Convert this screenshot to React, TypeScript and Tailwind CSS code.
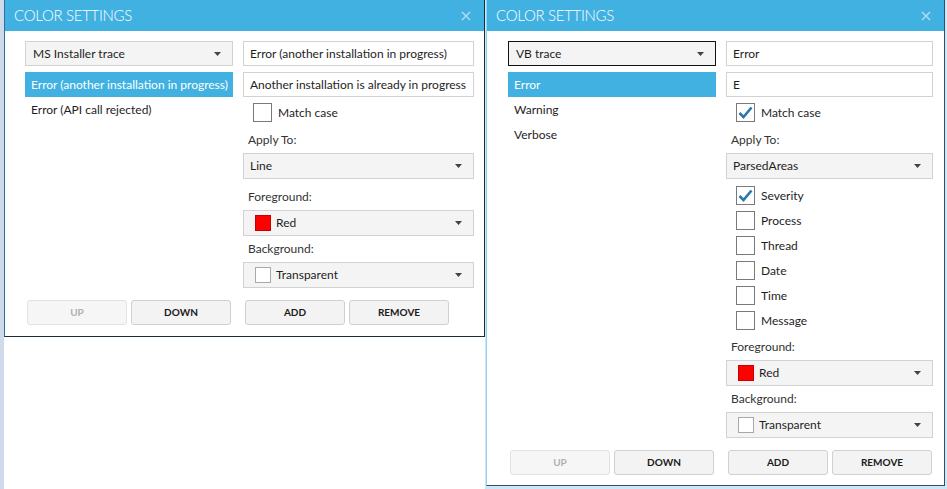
import React from "react";

const FONT = { fontFamily: "Lato, 'Open Sans', sans-serif" };

function Arrow() {
  return (
    <svg width="7" height="4" viewBox="0 0 7 4" className="shrink-0">
      <path d="M0 0 L7 0 L3.5 4 Z" fill="#444" />
    </svg>
  );
}

function Combo({ children, focused = false, h = 26 }: { children: React.ReactNode; focused?: boolean; h?: number }) {
  return (
    <div
      className={`flex items-center justify-between pl-[6px] pr-[11px] bg-[#f4f4f4] border ${focused ? "border-[#111]" : "border-[#d2d2d2]"}`}
      style={{ height: h }}
    >
      <div className="flex items-center gap-[5px] text-[12px] text-[#1e1e1e]">{children}</div>
      <Arrow />
    </div>
  );
}

function TextBox({ value }: { value: string }) {
  return (
    <div className="h-[25px] flex items-center px-[6px] bg-white border border-[#d2d2d2] text-[12px] text-[#1e1e1e] whitespace-nowrap overflow-hidden">
      {value}
    </div>
  );
}

function Check({ checked, label }: { checked: boolean; label: string }) {
  return (
    <div className="h-[25px] flex items-center pl-[10px] gap-[6px]">
      <div className="w-[19px] h-[19px] border border-[#7a7a7a] bg-white flex items-center justify-center">
        {checked && (
          <svg width="15" height="13" viewBox="0 0 15 13">
            <path d="M1.5 7 L5.5 11 L13.5 1.5" fill="none" stroke="#2a78ad" strokeWidth="2.6" />
          </svg>
        )}
      </div>
      <span className="text-[12px] text-[#1e1e1e]">{label}</span>
    </div>
  );
}

function Label({ children, mt }: { children: React.ReactNode; mt: number }) {
  return (
    <div className="h-[16px] leading-[16px] pl-[5px] mb-[5px] text-[12px] text-[#333]" style={{ marginTop: mt }}>
      {children}
    </div>
  );
}

function Swatch({ red }: { red: boolean }) {
  return red ? (
    <div className="w-[16px] h-[16px] bg-[#ff0000] border border-[#c80000] ml-[5px]" />
  ) : (
    <div className="w-[16px] h-[16px] bg-white border border-[#a8a8a8] ml-[5px]" />
  );
}

function Btn({ label, disabled = false }: { label: string; disabled?: boolean }) {
  return (
    <div
      className={`w-[100px] h-[25px] rounded-[3px] border flex items-center justify-center text-[10px] font-bold ${
        disabled ? "bg-[#f6f6f6] border-[#e2e2e2] text-[#b0b0b0]" : "bg-[#f3f3f3] border-[#d0d0d0] text-[#1a1a1a]"
      }`}
    >
      {label}
    </div>
  );
}

function Title() {
  return (
    <div className="h-[31px] bg-[#41b1e1] flex items-center justify-between pl-[9px] pr-[13px]">
      <span className="text-[15px] font-light text-white tracking-[-0.3px]">COLOR SETTINGS</span>
      <svg width="10" height="10" viewBox="0 0 10 10">
        <path d="M1 1 L9 9 M9 1 L1 9" stroke="#b9dff2" strokeWidth="1.3" />
      </svg>
    </div>
  );
}

function ListItem({ text, selected = false }: { text: string; selected?: boolean }) {
  return (
    <div
      className={`h-[25px] flex items-center px-[6px] text-[12px] whitespace-nowrap ${
        selected ? "bg-[#41b1e1] text-white" : "text-[#1e1e1e]"
      }`}
    >
      {text}
    </div>
  );
}

export default function App() {
  return (
    <div className="relative w-[947px] h-[489px] bg-white overflow-hidden" style={FONT}>
      {/* desktop left strip */}
      <div className="absolute left-0 top-0 w-[4px] h-[489px] bg-[#cfdbeb]" />
      {/* right window glow area */}
      <div className="absolute left-[485px] top-0 w-[462px] h-[489px] bg-[#c9e9f8]" />

      {/* Right window */}
      <div className="absolute left-[486px] top-0 w-[459px] h-[486px] bg-white border-l border-l-[#8fd3f3] border-r border-r-[#3b4b57] border-b border-b-[#3b4b57] flex flex-col">
        <Title />
        <div className="flex flex-col pl-[21px] pr-[11px] pt-[10px]">
          <div className="flex gap-[10px]">
            <div className="w-[208px] flex flex-col">
              <Combo focused h={25}>
                <span className="pl-[1px]">VB trace</span>
              </Combo>
              <div className="h-[6px]" />
              <ListItem text="Error" selected />
              <ListItem text="Warning" />
              <ListItem text="Verbose" />
            </div>
            <div className="flex-1 flex flex-col">
              <TextBox value="Error" />
              <div className="h-[6px]" />
              <TextBox value="E" />
              <div className="h-[3px]" />
              <Check checked label="Match case" />
              <Label mt={7}>Apply To:</Label>
              <Combo>ParsedAreas</Combo>
              <div className="h-[4px]" />
              <Check checked label="Severity" />
              <Check checked={false} label="Process" />
              <Check checked={false} label="Thread" />
              <Check checked={false} label="Date" />
              <Check checked={false} label="Time" />
              <Check checked={false} label="Message" />
              <Label mt={6}>Foreground:</Label>
              <Combo>
                <Swatch red />
                <span>Red</span>
              </Combo>
              <Label mt={5}>Background:</Label>
              <Combo>
                <Swatch red={false} />
                <span>Transparent</span>
              </Combo>
            </div>
          </div>
          <div className="flex gap-[10px] mt-[12px]">
            <div className="w-[208px] flex gap-[4px] pl-[2px]">
              <Btn label="UP" disabled />
              <Btn label="DOWN" />
            </div>
            <div className="flex gap-[4px] pl-[2px]">
              <Btn label="ADD" />
              <Btn label="REMOVE" />
            </div>
          </div>
        </div>
      </div>

      {/* Left window */}
      <div className="absolute left-[4px] top-0 w-[481px] h-[337px] bg-white border-l border-l-[#2f6f9c] border-r border-r-[#1c2a35] border-b border-b-[#1c2a35] flex flex-col">
        <Title />
        <div className="flex flex-col pl-[20px] pr-[10px] pt-[10px]">
          <div className="flex gap-[10px]">
            <div className="w-[208px] flex flex-col">
              <Combo h={25}>
                <span className="pl-[1px]">MS Installer trace</span>
              </Combo>
              <div className="h-[6px]" />
              <ListItem text="Error (another installation in progress)" selected />
              <ListItem text="Error (API call rejected)" />
            </div>
            <div className="flex-1 flex flex-col">
              <TextBox value="Error (another installation in progress)" />
              <div className="h-[6px]" />
              <TextBox value="Another installation is already in progress" />
              <div className="h-[3px]" />
              <Check checked={false} label="Match case" />
              <Label mt={7}>Apply To:</Label>
              <Combo>Line</Combo>
              <Label mt={10}>Foreground:</Label>
              <Combo>
                <Swatch red />
                <span>Red</span>
              </Combo>
              <Label mt={5}>Background:</Label>
              <Combo>
                <Swatch red={false} />
                <span>Transparent</span>
              </Combo>
            </div>
          </div>
          <div className="flex gap-[10px] mt-[12px]">
            <div className="w-[208px] flex gap-[4px] pl-[2px]">
              <Btn label="UP" disabled />
              <Btn label="DOWN" />
            </div>
            <div className="flex gap-[4px] pl-[2px]">
              <Btn label="ADD" />
              <Btn label="REMOVE" />
            </div>
          </div>
        </div>
      </div>
    </div>
  );
}
